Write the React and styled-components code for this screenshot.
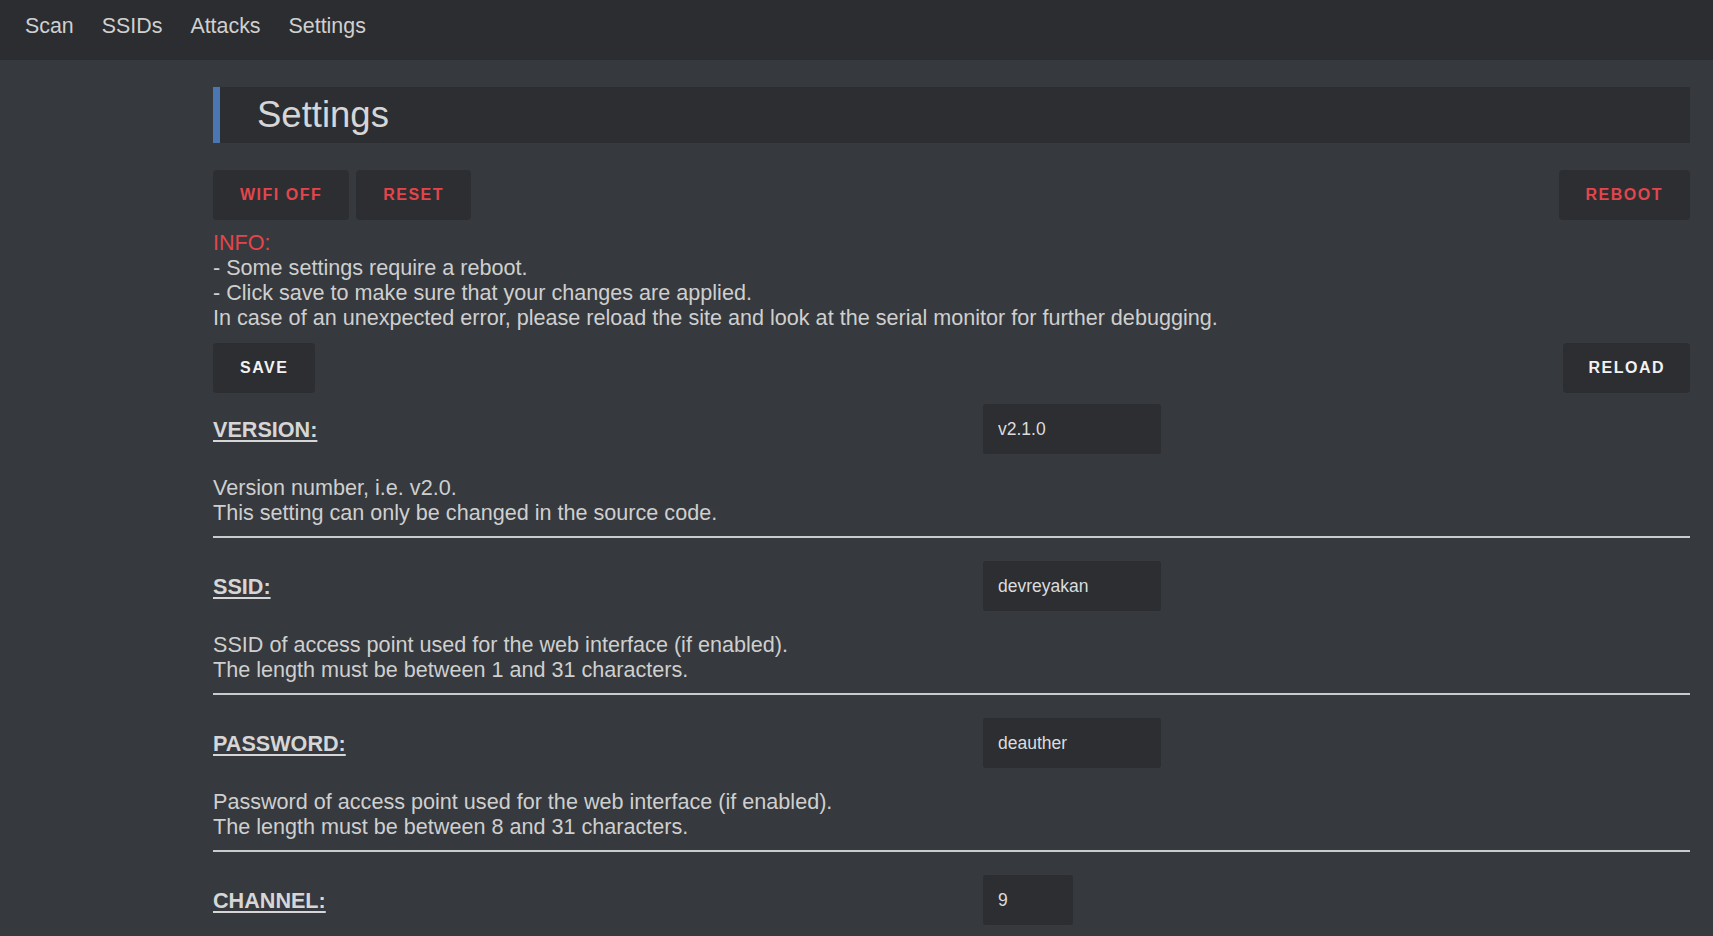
import React from "react";
import styled, { createGlobalStyle } from "styled-components";

const GlobalStyle = createGlobalStyle`
  html, body {
    margin: 0;
    padding: 0;
    background: #36393d;
  }
  body {
    font-family: "Liberation Sans", Arial, sans-serif;
    color: #d3d3d3;
  }
`;

const TopNav = styled.nav`
  display: flex;
  height: 60px;
  padding: 14px 0 0 11px;
  box-sizing: border-box;
  background: #2b2d30;
`;

const NavLink = styled.a`
  padding: 0 14px;
  font-size: 21.4px;
  line-height: 25px;
  color: #d0d0d0;
  text-decoration: none;
  cursor: pointer;
`;

const Main = styled.main`
  padding: 27px 23px 0 213px;
`;

const TitleBox = styled.div`
  display: flex;
  align-items: center;
  height: 56px;
  padding-left: 37px;
  border-left: 7px solid #4a76b2;
  background: #2c2e32;
  font-size: 36.5px;
  color: #d6d6d6;
`;

const ButtonRow = styled.div`
  display: flex;
  justify-content: space-between;
  margin-top: ${(p) => p.$top || 0}px;
`;

const ButtonGroup = styled.div`
  display: flex;
  gap: 7px;
`;

const Button = styled.button`
  height: 50px;
  padding: 0 ${(p) => p.$pad || 27}px;
  border: 0;
  border-radius: 4px;
  background: #2c2e32;
  font-family: "Liberation Sans", Arial, sans-serif;
  font-size: 16px;
  font-weight: 700;
  letter-spacing: 1.5px;
  color: ${(p) => (p.$danger ? "#e2464c" : "#f2f2f2")};
  cursor: pointer;
`;

const Info = styled.div`
  margin-top: 10px;
  font-size: 21.6px;
  line-height: 25px;
  color: #cfcfcf;
`;

const InfoTitle = styled.div`
  color: #e2464c;
`;

const SettingList = styled.div`
  margin-top: 11px;
`;

const Setting = styled.section`
  & + & {
    margin-top: 23px;
  }
`;

const SettingHead = styled.div`
  display: grid;
  grid-template-columns: 770px auto;
  align-items: center;
  height: 50px;
`;

const Label = styled.label`
  font-size: 21.6px;
  line-height: 25px;
  font-weight: 700;
  color: #d6d6d6;
  text-decoration: underline;
  text-decoration-thickness: 2px;
  text-underline-offset: 3px;
`;

const Input = styled.input`
  width: ${(p) => p.$width || 178}px;
  height: 50px;
  box-sizing: border-box;
  padding: 0 15px;
  border: 0;
  border-radius: 3px;
  background: #2c2e32;
  font-family: "Liberation Sans", Arial, sans-serif;
  font-size: 17.5px;
  color: #dcdcdc;
  outline: none;
`;

const Description = styled.p`
  margin: 21px 0 0;
  font-size: 21.6px;
  line-height: 25px;
  color: #cfcfcf;
`;

const Divider = styled.hr`
  margin: 11px 0 0;
  height: 2px;
  border: 0;
  background: #c9cbcd;
`;

const settings = [
  {
    name: "VERSION:",
    value: "v2.1.0",
    lines: ["Version number, i.e. v2.0.", "This setting can only be changed in the source code."],
  },
  {
    name: "SSID:",
    value: "devreyakan",
    lines: [
      "SSID of access point used for the web interface (if enabled).",
      "The length must be between 1 and 31 characters.",
    ],
  },
  {
    name: "PASSWORD:",
    value: "deauther",
    lines: [
      "Password of access point used for the web interface (if enabled).",
      "The length must be between 8 and 31 characters.",
    ],
  },
  {
    name: "CHANNEL:",
    value: "9",
    width: 90,
    lines: [],
  },
];

export default function App() {
  return (
    <>
      <GlobalStyle />
      <TopNav>
        <NavLink>Scan</NavLink>
        <NavLink>SSIDs</NavLink>
        <NavLink>Attacks</NavLink>
        <NavLink>Settings</NavLink>
      </TopNav>
      <Main>
        <TitleBox>Settings</TitleBox>
        <ButtonRow $top={27}>
          <ButtonGroup>
            <Button $danger>WIFI OFF</Button>
            <Button $danger>RESET</Button>
          </ButtonGroup>
          <Button $danger>REBOOT</Button>
        </ButtonRow>
        <Info>
          <InfoTitle>INFO:</InfoTitle>
          <div>- Some settings require a reboot.</div>
          <div>- Click save to make sure that your changes are applied.</div>
          <div>
            In case of an unexpected error, please reload the site and look at the serial monitor for
            further debugging.
          </div>
        </Info>
        <ButtonRow $top={13}>
          <Button>SAVE</Button>
          <Button $pad={25}>RELOAD</Button>
        </ButtonRow>
        <SettingList>
          {settings.map((s) => (
            <Setting key={s.name}>
              <SettingHead>
                <Label>{s.name}</Label>
                <Input defaultValue={s.value} $width={s.width} />
              </SettingHead>
              {s.lines.length > 0 && (
                <>
                  <Description>
                    {s.lines.map((l, i) => (
                      <React.Fragment key={i}>
                        {i > 0 && <br />}
                        {l}
                      </React.Fragment>
                    ))}
                  </Description>
                  <Divider />
                </>
              )}
            </Setting>
          ))}
        </SettingList>
      </Main>
    </>
  );
}
